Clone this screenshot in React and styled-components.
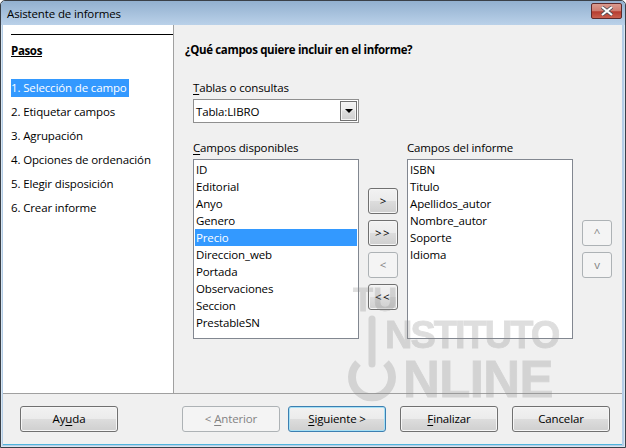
import React from 'react';
import styled, { createGlobalStyle } from 'styled-components';

const Global = createGlobalStyle`
  html, body { margin: 0; padding: 0; background: #fff; }
  body { font-family: "Open Sans", "Noto Sans", "Liberation Sans", sans-serif; font-size: 11.5px; letter-spacing: -0.14px; color: #000; }
`;

const Frame = styled.div`
  position: relative;
  width: 626px;
  height: 448px;
  box-sizing: border-box;
  display: flex;
  flex-direction: column;
  overflow: hidden;
  background: #b4cde6;
  border: 1px solid #3a4048;
  border-radius: 5px 5px 0 0;
  padding: 0 2px 2px 2px;
  box-shadow: inset 0 0 0 1px #d8e6f2;
`;

const TitleBar = styled.div`
  flex: 0 0 24px;
  margin: 0 -2px;
  padding: 0 0 0 6px;
  display: flex;
  align-items: center;
  justify-content: space-between;
  background: linear-gradient(#92b0cf, #bad1e9);
  color: #000;
  border-radius: 4px 4px 0 0;
`;

const Close = styled.div`
  width: 31px;
  height: 16px;
  margin: -4px 3px 0 0;
  display: flex;
  align-items: center;
  justify-content: center;
  box-sizing: border-box;
  border: 1px solid #5e2a2c;
  border-radius: 2px;
  background: linear-gradient(#d99a8e 0%, #cf7c70 50%, #b63c30 55%, #c9604f 100%);
`;

const Body = styled.div`
  flex: 1;
  display: flex;
  flex-direction: column;
  background: #f0f0f0;
  margin-right: 1px;
  border-bottom: 1px solid #4fb4dc;
  min-height: 0;
`;

const Main = styled.div`
  flex: 0 0 368px;
  display: flex;
  border-bottom: 1px solid #a0a0a0;
`;

const Sidebar = styled.aside`
  flex: 0 0 171px;
  box-sizing: border-box;
  background: #fff;
  border-right: 1px solid #a0a0a0;
  padding: 9px 0 0 8px;
`;

const SideRule = styled.div`
  height: 1px;
  background: #000;
`;

const StepsTitle = styled.div`
  margin: 7px 0 20px;
  line-height: 17px;
  font-weight: 700;
  letter-spacing: -0.34px;
  text-decoration: underline;
`;

const StepList = styled.div`
  display: flex;
  flex-direction: column;
  gap: 6px;
`;

const Step = styled.div`
  height: 18px;
  line-height: 18px;
  align-self: flex-start;
  width: ${p => (p.$active ? '118px' : 'auto')};
  white-space: nowrap;
  background: ${p => (p.$active ? '#3399ff' : 'transparent')};
  color: ${p => (p.$active ? '#fff' : '#000')};
`;

const Content = styled.section`
  flex: 1;
  padding: 16px 0 0 12px;
  min-width: 0;
`;

const Heading = styled.div`
  font-weight: 700;
  line-height: 18px;
  letter-spacing: -0.34px;
  margin-left: -1px;
`;

const Form = styled.div`
  padding: 20px 0 0 7px;
`;

const Label = styled.div`
  line-height: 17px;
  height: 17px;
  margin-bottom: 3px;
  white-space: nowrap;
  u { text-underline-offset: 2px; }
`;

const ComboBox = styled.div`
  width: 166px;
  height: 24px;
  box-sizing: border-box;
  margin-bottom: 16px;
  border: 1px solid #8f8f8f;
  background: #fff;
  display: flex;
  align-items: center;
  justify-content: space-between;
  padding: 0 1px 0 2px;
`;

const ComboButton = styled.div`
  width: 17px;
  height: 20px;
  box-sizing: border-box;
  border: 1px solid #707070;
  box-shadow: inset 0 0 0 1px #f4f4f4;
  background: linear-gradient(#f2f2f2 0%, #ebebeb 45%, #dddddd 50%, #cfcfcf 100%);
  display: flex;
  align-items: center;
  justify-content: center;
  &::after {
    content: '';
    border-left: 4px solid transparent;
    border-right: 4px solid transparent;
    border-top: 4px solid #000;
  }
`;

const Columns = styled.div`
  display: flex;
  align-items: flex-start;
`;

const Field = styled.div`
  width: 166px;
  flex: none;
  margin-left: ${p => p.$left || 0}px;
`;

const ListBox = styled.div`
  height: 180px;
  box-sizing: border-box;
  border: 1px solid #828790;
  background: #fff;
  padding: 1px;
`;

const Row = styled.div`
  height: 17px;
  line-height: 17px;
  padding-left: 1px;
  white-space: nowrap;
  background: ${p => (p.$selected ? '#3399ff' : 'transparent')};
  color: ${p => (p.$selected ? '#fff' : '#000')};
`;

const MoveColumn = styled.div`
  flex: none;
  width: 30px;
  margin: ${p => p.$top}px 0 0 ${p => p.$left}px;
  display: flex;
  flex-direction: column;
  gap: 6px;
`;

const Button = styled.button`
  box-sizing: border-box;
  width: ${p => p.$w || 30}px;
  height: 26px;
  padding: 0;
  margin: 0;
  font: inherit;
  line-height: 22px;
  letter-spacing: ${p => (p.$spaced ? '1.5px' : '-0.14px')};
  white-space: nowrap;
  border-radius: 3px;
  border: 1px solid ${p => (p.$off ? '#adb2b5' : p.$focus ? '#3c7fb1' : '#707070')};
  color: ${p => (p.$off ? '#838383' : '#000')};
  background: ${p =>
    p.$off
      ? '#f4f4f4'
      : 'linear-gradient(#f2f2f2 0%, #ebebeb 48%, #dddddd 50%, #cfcfcf 100%)'};
  box-shadow: inset 0 0 0 1px ${p => (p.$focus ? '#a6e0f5' : p.$off ? '#f4f4f4' : '#f6f6f6')};
  u { text-underline-offset: 2px; }
`;

const Footer = styled.footer`
  flex: 1;
  display: flex;
  align-items: flex-start;
  padding: 12px 0 0 17px;
`;

const FooterGap = styled.div`
  flex: none;
  width: ${p => p.$w}px;
`;

const Watermark = styled.div`
  position: absolute;
  left: 346px;
  top: 283px;
  width: 215px;
  height: 124px;
  pointer-events: none;
  color: #8a8a8a;
  opacity: 0.28;
  filter: blur(0.6px);
  font-family: "Liberation Sans", Arial, sans-serif;
  font-weight: 700;
  line-height: 1;
  -webkit-text-stroke: 0.8px #8a8a8a;
`;

const WmText = styled.div`
  position: absolute;
  left: ${p => p.$x}px;
  top: ${p => p.$y}px;
  font-size: ${p => p.$size}px;
  letter-spacing: ${p => p.$ls || 0}px;
  white-space: nowrap;
`;

const WmIcon = styled.svg`
  position: absolute;
  left: 0;
  top: 30px;
`;

const steps = ['1. Selección de campo', '2. Etiquetar campos', '3. Agrupación', '4. Opciones de ordenación', '5. Elegir disposición', '6. Crear informe'];
const available = ['ID', 'Editorial', 'Anyo', 'Genero', 'Precio', 'Direccion_web', 'Portada', 'Observaciones', 'Seccion', 'PrestableSN'];
const chosen = ['ISBN', 'Titulo', 'Apellidos_autor', 'Nombre_autor', 'Soporte', 'Idioma'];

export default function App() {
  return (
    <Frame>
      <Global />
      <TitleBar>
        Asistente de informes
        <Close>
          <svg width="14" height="10" viewBox="0 0 14 10">
            <path d="M2 1 L12 9 M12 1 L2 9" stroke="#4a4f57" strokeWidth="3.6" />
            <path d="M2 1 L12 9 M12 1 L2 9" stroke="#fff" strokeWidth="2.2" />
          </svg>
        </Close>
      </TitleBar>
      <Body>
        <Main>
          <Sidebar>
            <SideRule />
            <StepsTitle>Pasos</StepsTitle>
            <StepList>
              {steps.map((s, i) => (
                <Step key={s} $active={i === 0}>{s}</Step>
              ))}
            </StepList>
          </Sidebar>
          <Content>
            <Heading>¿Qué campos quiere incluir en el informe?</Heading>
            <Form>
              <Label><u>T</u>ablas o consultas</Label>
              <ComboBox>
                Tabla:LIBRO
                <ComboButton />
              </ComboBox>
              <Columns>
                <Field>
                  <Label><u>C</u>ampos disponibles</Label>
                  <ListBox>
                    {available.map(r => (
                      <Row key={r} $selected={r === 'Precio'}>{r}</Row>
                    ))}
                  </ListBox>
                </Field>
                <MoveColumn $top={49} $left={9}>
                  <Button>&gt;</Button>
                  <Button $spaced>&gt;&gt;</Button>
                  <Button $off>&lt;</Button>
                  <Button $spaced>&lt;&lt;</Button>
                </MoveColumn>
                <Field $left={9}>
                  <Label>Campos del informe</Label>
                  <ListBox>
                    {chosen.map(r => (
                      <Row key={r}>{r}</Row>
                    ))}
                  </ListBox>
                </Field>
                <MoveColumn $top={81} $left={9}>
                  <Button $off>^</Button>
                  <Button $off>v</Button>
                </MoveColumn>
              </Columns>
            </Form>
          </Content>
        </Main>
        <Footer>
          <Button $w={98}>Ay<u>u</u>da</Button>
          <FooterGap $w={64} />
          <Button $w={98} $off>&lt; <u>A</u>nterior</Button>
          <FooterGap $w={8} />
          <Button $w={98} $focus><u>S</u>iguiente &gt;</Button>
          <FooterGap $w={14} />
          <Button $w={98}><u>F</u>inalizar</Button>
          <FooterGap $w={14} />
          <Button $w={98}>Cancelar</Button>
        </Footer>
      </Body>
      <Watermark>
        <WmText $x={6} $y={-1} $size={33}>TU</WmText>
        <WmText $x={38} $y={32} $size={38} $ls={-2}>NSTITUTO</WmText>
        <WmText $x={56} $y={70} $size={51} $ls={-0.6}>NLINE</WmText>
        <WmIcon width="50" height="94" viewBox="0 0 50 94">
          <path d="M25 5 V50" stroke="#8a8a8a" strokeWidth="7" strokeLinecap="round" fill="none" />
          <path d="M11 49 A20 20 0 1 0 39 49" stroke="#8a8a8a" strokeWidth="8" fill="none" />
        </WmIcon>
      </Watermark>
    </Frame>
  );
}
